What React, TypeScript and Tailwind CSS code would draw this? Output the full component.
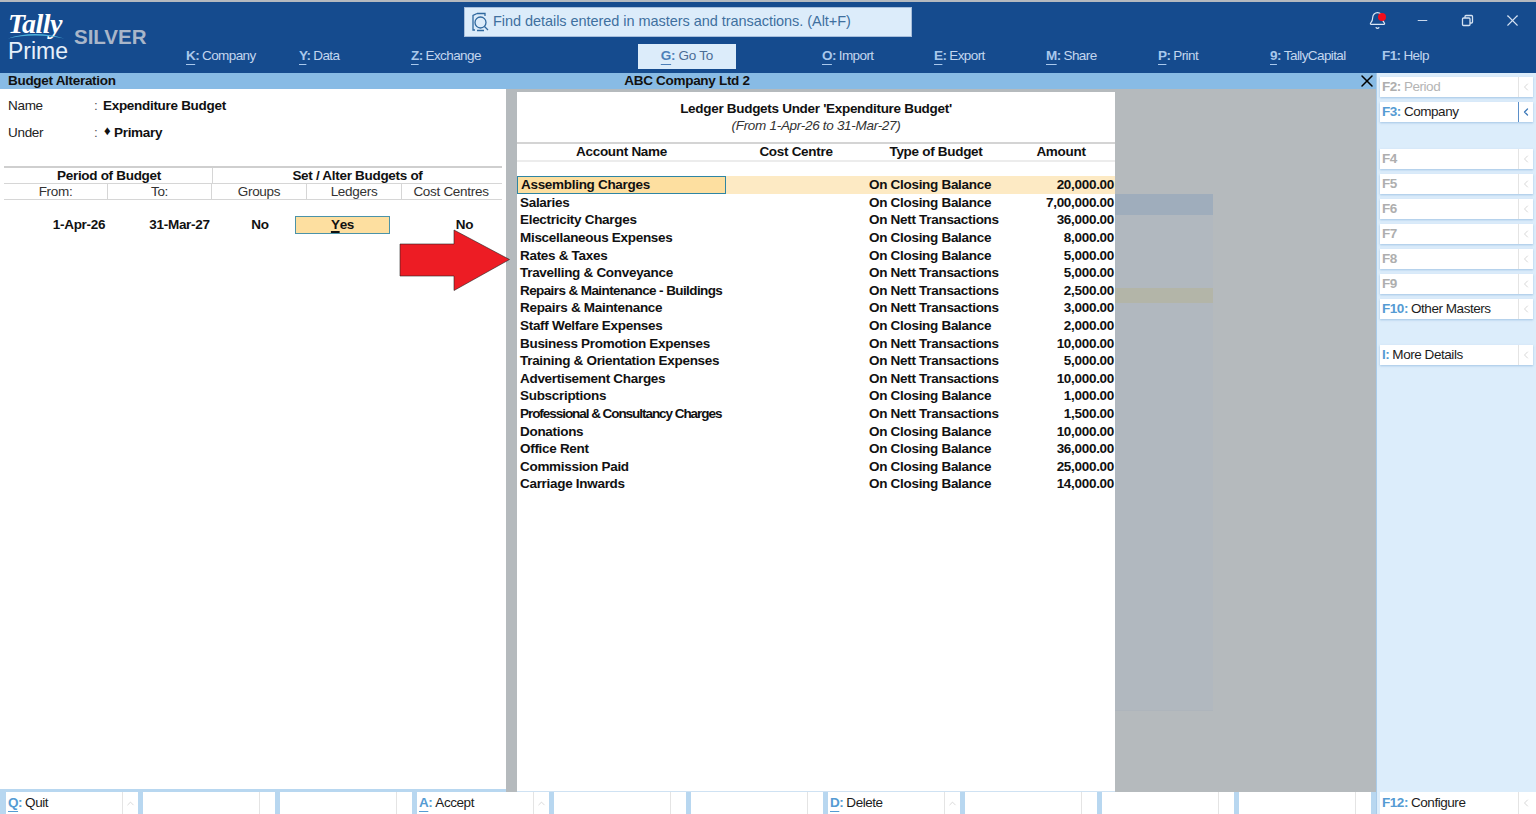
import React from "react";
import { Bell, ChevronLeft, ChevronUp, Minus, X } from "lucide-react";

const rows: [string, string, string][] = [
  ["Assembling Charges", "On Closing Balance", "20,000.00"],
  ["Salaries", "On Closing Balance", "7,00,000.00"],
  ["Electricity Charges", "On Nett Transactions", "36,000.00"],
  ["Miscellaneous Expenses", "On Closing Balance", "8,000.00"],
  ["Rates & Taxes", "On Closing Balance", "5,000.00"],
  ["Travelling & Conveyance", "On Nett Transactions", "5,000.00"],
  ["Repairs & Maintenance - Buildings", "On Nett Transactions", "2,500.00"],
  ["Repairs & Maintenance", "On Nett Transactions", "3,000.00"],
  ["Staff Welfare Expenses", "On Closing Balance", "2,000.00"],
  ["Business Promotion Expenses", "On Nett Transactions", "10,000.00"],
  ["Training & Orientation Expenses", "On Nett Transactions", "5,000.00"],
  ["Advertisement Charges", "On Nett Transactions", "10,000.00"],
  ["Subscriptions", "On Closing Balance", "1,000.00"],
  ["Professional & Consultancy Charges", "On Nett Transactions", "1,500.00"],
  ["Donations", "On Closing Balance", "10,000.00"],
  ["Office Rent", "On Closing Balance", "36,000.00"],
  ["Commission Paid", "On Closing Balance", "25,000.00"],
  ["Carriage Inwards", "On Closing Balance", "14,000.00"],
];

function nameTracking(name: string) {
  if (name.startsWith("Professional")) return "tracking-[-1.05px]";
  if (name.endsWith("Buildings")) return "tracking-[-0.6px]";
  return "";
}

function MenuItem({ k, label, w, plain }: { k: string; label: string; w: string; plain?: boolean }) {
  return (
    <div className={`${w} shrink-0 whitespace-nowrap text-[13.5px] tracking-[-0.6px] text-[#c3d6ee]`}>
      <span className={`font-bold text-[#a9c8ec] ${plain ? "" : "underline decoration-1 underline-offset-4"}`}>{k}</span>
      <span className="font-bold text-[#a9c8ec]">:</span>
      <span className="ml-[3px]">{label}</span>
    </div>
  );
}

function SideBtn({ k, label, active, disabled }: { k: string; label?: string; active?: boolean; disabled?: boolean }) {
  return (
    <div className="ml-[3px] mr-[3px] flex h-[20px] items-center bg-white shadow-[0_1px_2px_rgba(110,160,210,0.5)]">
      <div className="flex-1 whitespace-nowrap pl-[2px] text-[13.5px] tracking-[-0.45px]">
        <span className={`font-bold ${disabled ? "text-[#aeaeae]" : "text-[#559bd3]"}`}>{k}{label ? ":" : ""}</span>
        {label && <span className={`ml-[3px] ${disabled ? "text-[#b4b4b4]" : "text-[#1c1c1c]"}`}>{label}</span>}
      </div>
      <div className={`flex h-full w-[15px] items-center justify-center border-l ${active ? "border-[#5b8fc9]" : "border-[#e4e4e4]"}`}>
        <ChevronLeft size={12} strokeWidth={active ? 2.5 : 1.5} className={active ? "text-[#3c78b8]" : "text-[#c8c8c8]"} />
      </div>
    </div>
  );
}

function BottomBtn({ k, label }: { k?: string; label?: string }) {
  return (
    <div className="flex h-[22px] w-[132px] shrink-0 items-center bg-white">
      <div className="flex-1 whitespace-nowrap pl-[2px] text-[13.5px] leading-[20px] tracking-[-0.45px]">
        {k && (
          <>
            <span className="font-bold text-[#559bd3] underline decoration-1 underline-offset-4">{k}</span>
            <span className="font-bold text-[#559bd3]">:</span>
            <span className="ml-[3px] text-[#1c1c1c]">{label}</span>
          </>
        )}
      </div>
      <div className="flex h-full w-[16px] items-center justify-center border-l border-[#e4e4e4]">
        {k && <ChevronUp size={11} strokeWidth={1.5} className="text-[#c8c8c8]" />}
      </div>
    </div>
  );
}

export default function App() {
  return (
    <div className="flex h-[814px] w-[1536px] flex-col overflow-hidden bg-white font-['Liberation_Sans',Arial,sans-serif] text-[#111]">
      {/* Title bar */}
      <header className="flex h-[73px] shrink-0 border-t-2 border-[#b4b9bf] bg-[#154b8e]">
        <div className="flex w-[186px] shrink-0">
          <div className="w-[74px] shrink-0 pl-[8px]">
            <div className="mt-[10px] h-[24px] whitespace-nowrap font-['Liberation_Serif',serif] text-[28px] font-bold italic leading-[24px] tracking-[-0.5px] text-white">Tally</div>
            <svg width="56" height="6" viewBox="0 0 56 6" className="-mt-[3px] block">
              <path d="M0 5.500 C16 -0.500 38 -0.500 56 5.500 C38 1.500 16 1.500 0 5.500Z" fill="#4fb3dd" />
            </svg>
            <div className="text-[23px] leading-[24px] text-[#e6f0fa]">Prime</div>
          </div>
          <div className="mt-[23px] text-[20.5px] font-bold leading-[24px] text-[#a9b6c9]">SILVER</div>
        </div>
        <div className="flex min-w-0 flex-1 flex-col">
          <div className="flex h-[34px] items-start">
            <div className="ml-[278px] mt-[5px] flex h-[30px] w-[448px] shrink-0 items-center whitespace-nowrap border border-[#a7bedb] bg-[#dcecfa] pl-[6px] text-[14.5px] tracking-[-0.05px] text-[#40709f]">
              <svg width="18" height="20" viewBox="0 0 18 20" fill="none" stroke="#2f689e" strokeWidth="1.3" className="mr-[4px] shrink-0">
                <path d="M6 1.500H14V4M4 18H2V3.500L6 1.500" />
                <circle cx="9.500" cy="10.500" r="5.500" />
                <path d="M13.500 14.500L17 18M6 18.500H13" />
              </svg>
              Find details entered in masters and transactions. (Alt+F)
            </div>
            <div className="ml-[443px] mt-[9px] flex shrink-0 items-center">
              <div className="relative flex w-[45px] justify-center">
                <Bell size={19} strokeWidth={1.5} className="text-[#dbe7f5]" />
                <span className="absolute left-[23px] top-[2px] h-[8px] w-[8px] rounded-full bg-[#f20d1b]" />
              </div>
              <div className="flex w-[45px] justify-center"><Minus size={15} strokeWidth={1.5} className="text-[#d5e2f2]" /></div>
              <div className="flex w-[45px] justify-center">
                <svg width="13" height="13" viewBox="0 0 13 13" fill="none" stroke="#d5e2f2" strokeWidth="1.3">
                  <rect x="1.500" y="4" width="7.500" height="7.500" rx="1" />
                  <path d="M4 4V2.500C4 2 4.500 1.500 5 1.500H10.500C11 1.500 11.500 2 11.500 2.500V8C11.500 8.500 11 9 10.500 9H9" />
                </svg>
              </div>
              <div className="flex w-[45px] justify-center"><X size={19} strokeWidth={1.4} className="text-[#d5e2f2]" /></div>
            </div>
          </div>
          <div className="mt-[7px] flex h-[27px] items-center">
            <MenuItem k="K" label="Company" w="w-[113px]" />
            <MenuItem k="Y" label="Data" w="w-[112px]" />
            <MenuItem k="Z" label="Exchange" w="w-[227px]" />
            <div className="flex h-[25px] w-[98px] shrink-0 items-center justify-center whitespace-nowrap bg-[#dcecfa] text-[13.5px] tracking-[-0.2px] text-[#4b6d95]">
              <span className="font-bold text-[#4c7fb8] underline decoration-1 underline-offset-4">G</span>
              <span className="font-bold text-[#4c7fb8]">:</span>
              <span className="ml-[3px]">Go To</span>
            </div>
            <div className="w-[86px] shrink-0" />
            <MenuItem k="O" label="Import" w="w-[112px]" />
            <MenuItem k="E" label="Export" w="w-[112px]" />
            <MenuItem k="M" label="Share" w="w-[112px]" />
            <MenuItem k="P" label="Print" w="w-[112px]" />
            <MenuItem k="9" label="TallyCapital" w="w-[112px]" />
            <MenuItem k="F1" label="Help" w="w-[112px]" plain />
          </div>
        </div>
      </header>

      {/* Body */}
      <div className="flex min-h-0 flex-1">
        <div className="flex w-[1376px] shrink-0 flex-col">
          <div className="relative flex h-[16px] shrink-0 items-center bg-[#88bbe5] pb-[1px] text-[13.5px] font-bold leading-[15px] tracking-[-0.3px]">
            <div className="w-[620px] pl-[8px]">Budget Alteration</div>
            <div className="w-[134px] whitespace-nowrap text-center">ABC Company Ltd 2</div>
            <X size={20} strokeWidth={1.8} className="absolute right-[-1px] top-[-2px] text-black" />
          </div>

          <div className="relative flex min-h-0 flex-1 bg-[#b5babd]">
            {/* Left pane */}
            <div className="flex w-[506px] shrink-0 flex-col border-b-[3px] border-[#b8d7f0] bg-white px-[4px] text-[13.5px] tracking-[-0.3px]">
              <div className="mt-[8px] flex h-[17px] items-center leading-[17px]">
                <div className="w-[90px] pl-[4px] text-[#222]">Name</div>
                <div className="w-[9px] text-[#555]">:</div>
                <div className="font-bold">Expenditure Budget</div>
              </div>
              <div className="mt-[10px] flex h-[17px] items-center leading-[17px]">
                <div className="w-[90px] pl-[4px] text-[#222]">Under</div>
                <div className="w-[10px] text-[#555]">:</div>
                <div className="mb-[4px] w-[10px] text-[13px] leading-[13px]">♦</div>
                <div className="font-bold">Primary</div>
              </div>
              <div className="mt-[25px] w-[498px] border-t-2 border-[#cfcfcf]">
                <div className="flex h-[16px] items-center border-b border-[#d6d6d6] font-bold leading-[16px]">
                  <div className="flex h-full w-[209px] items-center justify-center border-r border-[#d6d6d6] pl-[2px]">Period of Budget</div>
                  <div className="flex-1 text-center">Set / Alter Budgets of</div>
                </div>
                <div className="flex h-[16px] items-center border-b border-[#d6d6d6] leading-[16px] text-[#333]">
                  <div className="flex h-full w-[104px] items-center justify-center border-r border-[#d6d6d6]">From:</div>
                  <div className="flex h-full w-[104px] items-center justify-center border-r border-[#d6d6d6]">To:</div>
                  <div className="flex h-full w-[95px] items-center justify-center border-r border-[#d6d6d6]">Groups</div>
                  <div className="flex h-full w-[95px] items-center justify-center border-r border-[#d6d6d6]">Ledgers</div>
                  <div className="flex-1 pr-[2px] text-center">Cost Centres</div>
                </div>
                <div className="mt-[16px] flex h-[18px] items-center font-bold leading-[18px]">
                  <div className="ml-[25px] w-[100px] text-center">1-Apr-26</div>
                  <div className="w-[101px] text-center">31-Mar-27</div>
                  <div className="w-[60px] text-center">No</div>
                  <div className="ml-[5px] flex h-[18px] w-[95px] items-center justify-center border border-[#4b93a8] bg-[#fddfa0]">
                    <span className="underline decoration-2 underline-offset-2">Y</span>es
                  </div>
                  <div className="ml-[62px] w-[25px] text-center">No</div>
                </div>
              </div>
            </div>

            {/* Divider */}
            <div className="w-[11px] shrink-0" />

            {/* Report panel */}
            <div className="mt-[3px] flex w-[598px] shrink-0 flex-col border-b border-[#cfe2f3] bg-white text-[13.5px] tracking-[-0.3px]">
              <div className="mt-[8px] text-center font-bold leading-[17px]">Ledger Budgets Under 'Expenditure Budget'</div>
              <div className="text-center italic leading-[17px] text-[#333]">(From 1-Apr-26 to 31-Mar-27)</div>
              <div className="mt-[8px] box-content flex h-[16px] items-center border-t-2 border-[#d4d4d4] font-bold leading-[16px]">
                <div className="w-[209px] text-center">Account Name</div>
                <div className="w-[140px] text-center">Cost Centre</div>
                <div className="w-[140px] text-center">Type of Budget</div>
                <div className="flex-1 pl-[1px] text-center">Amount</div>
              </div>
              <div className="h-[2px] bg-[#ececec]" />
              <div className="mt-[14px] font-bold">
                {rows.map(([name, type, amount], i) => (
                  <div key={name} className={`flex h-[17.6px] items-center leading-[17px] ${i === 0 ? "bg-[#fdeac4]" : ""}`}>
                    <div className={`flex h-full w-[209px] shrink-0 items-center whitespace-nowrap pl-[3px] ${nameTracking(name)} ${i === 0 ? "border border-[#2f85a3] bg-[#fddfa0] pl-[2px]" : ""}`}>
                      {name}
                    </div>
                    <div className="w-[143px] shrink-0" />
                    <div className="w-[150px] shrink-0 whitespace-nowrap">{type}</div>
                    <div className="flex-1 pr-[1px] text-right">{amount}</div>
                  </div>
                ))}
              </div>
            </div>

            {/* Dimmed area */}
            <div className="flex-1 pt-[105px]">
              <div className="h-[517px] w-[98px] border-b border-[#aeb5bc] bg-[#b1b8bf]">
                <div className="h-[21px] bg-[#9fadbc]" />
                <div className="mt-[73px] h-[15px] bg-[#b3b5a8]" />
              </div>
            </div>

            {/* Arrow */}
            <svg width="112" height="63" viewBox="0 0 112 63" className="absolute left-[399px] top-[140px]">
              <path d="M1 15H55V1L110.500 30.500L55 61.500V47H1Z" fill="#ed1c24" stroke="#222" strokeWidth="0.6" />
            </svg>
          </div>
        </div>

        {/* Function key sidebar */}
        <aside className="flex flex-1 flex-col gap-[5px] border-l border-[#a9cbe9] bg-[#dcedfb] pt-[4px]">
          <SideBtn k="F2" label="Period" disabled />
          <SideBtn k="F3" label="Company" active />
          <div className="h-[17px]" />
          <SideBtn k="F4" disabled />
          <SideBtn k="F5" disabled />
          <SideBtn k="F6" disabled />
          <SideBtn k="F7" disabled />
          <SideBtn k="F8" disabled />
          <SideBtn k="F9" disabled />
          <SideBtn k="F10" label="Other Masters" />
          <div className="h-[16px]" />
          <SideBtn k="I" label="More Details" />
        </aside>
      </div>

      {/* Bottom bar */}
      <footer className="flex h-[22px] shrink-0">
        <div className="flex w-[1376px] shrink-0 gap-[5px] bg-[#b8d7f0] pl-[6px]">
          <BottomBtn k="Q" label="Quit" />
          <BottomBtn />
          <BottomBtn />
          <BottomBtn k="A" label="Accept" />
          <BottomBtn />
          <BottomBtn />
          <BottomBtn k="D" label="Delete" />
          <BottomBtn />
          <BottomBtn />
          <BottomBtn />
        </div>
        <div className="flex flex-1 border-l border-[#a9cbe9] bg-[#dcedfb] pl-[3px]">
          <div className="flex h-[22px] flex-1 items-center bg-white">
            <div className="flex-1 whitespace-nowrap pl-[2px] text-[13.5px] leading-[20px] tracking-[-0.45px]">
              <span className="font-bold text-[#559bd3]">F12:</span>
              <span className="ml-[3px] text-[#1c1c1c]">Configure</span>
            </div>
            <div className="flex h-full w-[18px] items-center justify-center border-l border-[#e4e4e4] pr-[3px]">
              <ChevronLeft size={12} strokeWidth={1.5} className="text-[#c8c8c8]" />
            </div>
          </div>
        </div>
      </footer>
    </div>
  );
}
